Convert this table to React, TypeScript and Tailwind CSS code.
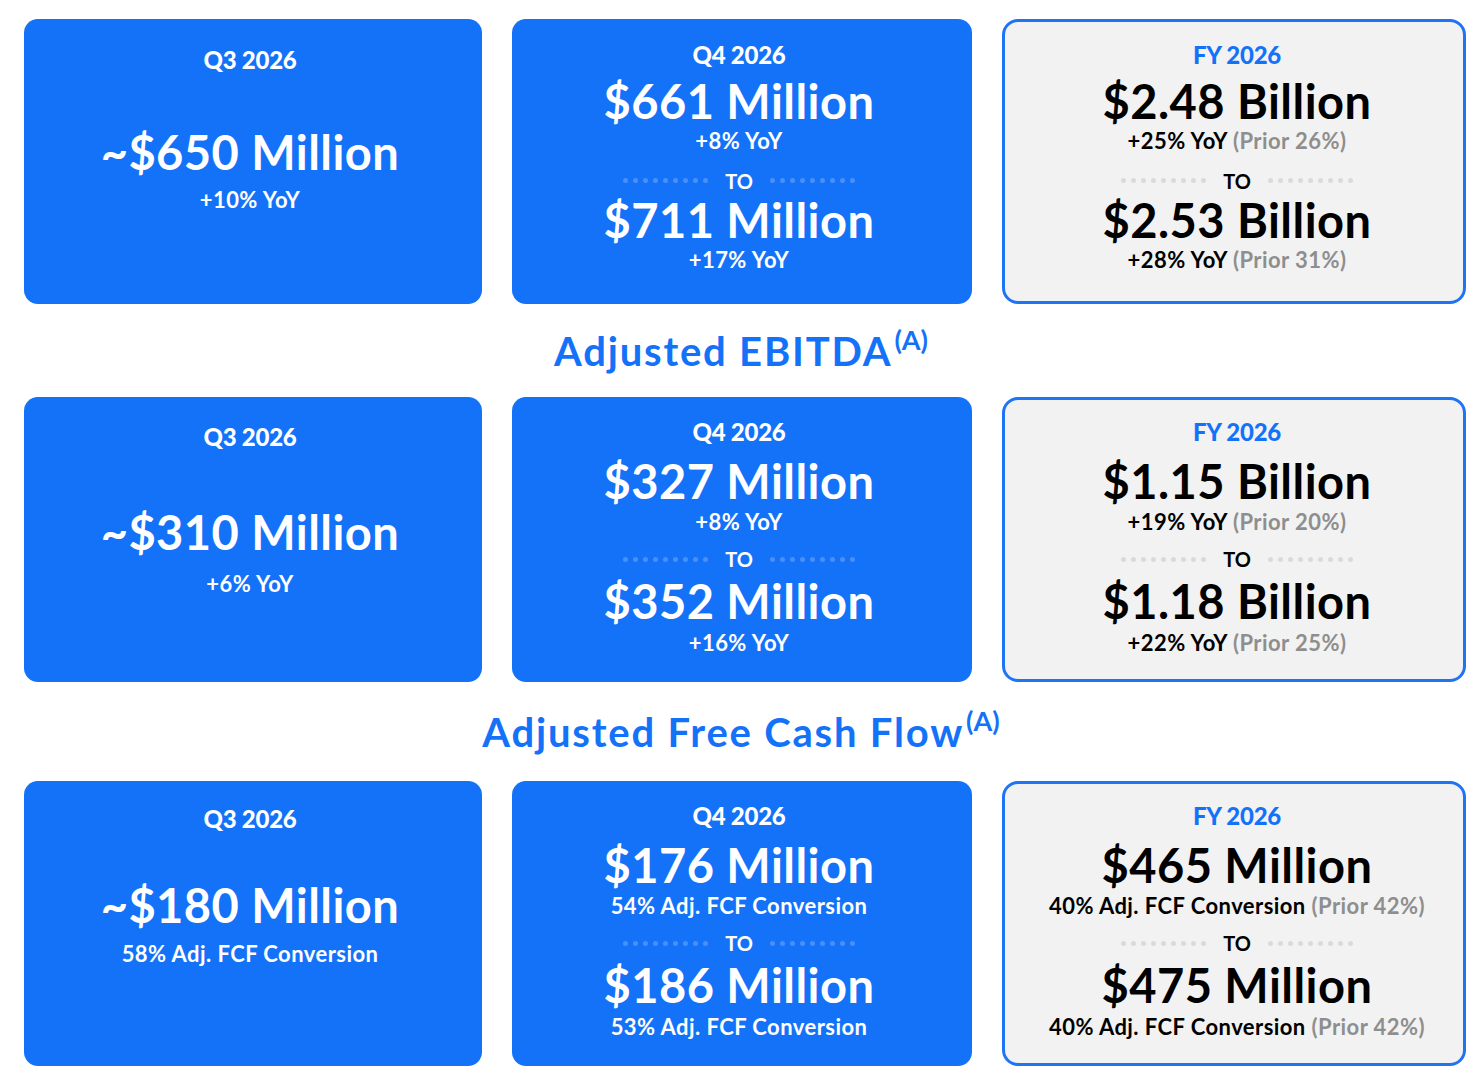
import React from 'react';

type Sub = { text: string; prior?: string };

type Range = {
  title: string;
  low: string;
  lowSub: Sub;
  high: string;
  highSub: Sub;
};

type Single = {
  title: string;
  value: string;
  sub: string;
  pt: string;
  valueMt: string;
  subMt: string;
};

type Section = {
  heading?: string;
  headingH: string;
  compact?: boolean;
  single: Single;
  quarter: Range;
  year: Range;
};

const sections: Section[] = [
  {
    headingH: '',
    compact: true,
    single: { title: 'Q3 2026', value: '~$650 Million', sub: '+10% YoY', pt: 'pt-[29px]', valueMt: 'mt-[58px]', subMt: 'mt-[11px]' },
    quarter: {
      title: 'Q4 2026',
      low: '$661 Million',
      lowSub: { text: '+8% YoY' },
      high: '$711 Million',
      highSub: { text: '+17% YoY' },
    },
    year: {
      title: 'FY 2026',
      low: '$2.48 Billion',
      lowSub: { text: '+25% YoY', prior: 'Prior 26%' },
      high: '$2.53 Billion',
      highSub: { text: '+28% YoY', prior: 'Prior 31%' },
    },
  },
  {
    heading: 'Adjusted EBITDA',
    headingH: 'h-[93px]',
    single: { title: 'Q3 2026', value: '~$310 Million', sub: '+6% YoY', pt: 'pt-[28px]', valueMt: 'mt-[61px]', subMt: 'mt-[15px]' },
    quarter: {
      title: 'Q4 2026',
      low: '$327 Million',
      lowSub: { text: '+8% YoY' },
      high: '$352 Million',
      highSub: { text: '+16% YoY' },
    },
    year: {
      title: 'FY 2026',
      low: '$1.15 Billion',
      lowSub: { text: '+19% YoY', prior: 'Prior 20%' },
      high: '$1.18 Billion',
      highSub: { text: '+22% YoY', prior: 'Prior 25%' },
    },
  },
  {
    heading: 'Adjusted Free Cash Flow',
    headingH: 'h-[99px]',
    single: { title: 'Q3 2026', value: '~$180 Million', sub: '58% Adj. FCF Conversion', pt: 'pt-[26px]', valueMt: 'mt-[52px]', subMt: 'mt-[12px]' },
    quarter: {
      title: 'Q4 2026',
      low: '$176 Million',
      lowSub: { text: '54% Adj. FCF Conversion' },
      high: '$186 Million',
      highSub: { text: '53% Adj. FCF Conversion' },
    },
    year: {
      title: 'FY 2026',
      low: '$465 Million',
      lowSub: { text: '40% Adj. FCF Conversion', prior: 'Prior 42%' },
      high: '$475 Million',
      highSub: { text: '40% Adj. FCF Conversion', prior: 'Prior 42%' },
    },
  },
];

const Dots = ({ light }: { light: boolean }) => (
  <div className="flex gap-[5px]">
    {Array.from({ length: 9 }).map((_, i) => (
      <span
        key={i}
        className={`w-[5px] h-[5px] rounded-full ${light ? 'bg-[#dadada]' : 'bg-[#4a8ffb]'}`}
      />
    ))}
  </div>
);

const SubLine = ({ sub }: { sub: Sub }) => (
  <>
    {sub.text}
    {sub.prior && <span className="text-[#8e8e8e]"> ({sub.prior})</span>}
  </>
);

const SingleCard = ({ data }: { data: Single }) => (
  <div className={`h-[285px] rounded-[14px] bg-[#1472f9] text-white flex flex-col items-center pr-[6px] ${data.pt}`}>
    <div className="leading-[24px] text-[24px] font-black tracking-[-0.01em]">{data.title}</div>
    <div className={`leading-[44px] text-[47px] font-bold tracking-[0.01em] ${data.valueMt}`}>{data.value}</div>
    <div className={`leading-[30px] text-[22px] font-bold tracking-[0.02em] ${data.subMt}`}>{data.sub}</div>
  </div>
);

const RangeCard = ({ data, fy, compact }: { data: Range; fy?: boolean; compact?: boolean }) => (
  <div
    className={`h-[285px] flex flex-col items-center ${
      fy
        ? 'rounded-[16px] border-[3px] border-[#1f74f6] bg-[#f2f2f2] text-black pl-[6px]'
        : 'rounded-[14px] bg-[#1472f9] text-white pr-[6px]'
    } ${compact ? (fy ? 'pt-[6px]' : 'pt-[9px]') : fy ? 'pt-[5px]' : 'pt-[8px]'}`}
  >
    <div className={`leading-[54px] text-[24px] font-black tracking-[-0.01em] ${fy ? 'text-[#1472f9]' : 'text-white'}`}>
      {data.title}
    </div>
    <div className={`text-[47px] font-bold tracking-[0.01em] ${compact ? 'leading-[39px]' : 'leading-[44px]'}`}>
      {data.low}
    </div>
    <div className={`text-[22px] font-bold tracking-[0.02em] ${compact ? 'leading-[40px]' : 'leading-[38px]'}`}>
      <SubLine sub={data.lowSub} />
    </div>
    <div className={`flex items-center gap-[17px] ${compact ? 'h-[39px]' : 'h-[36px]'}`}>
      <Dots light={!!fy} />
      <span className="text-[20px] font-bold leading-none">TO</span>
      <Dots light={!!fy} />
    </div>
    <div className={`text-[47px] font-bold tracking-[0.01em] ${compact ? 'leading-[41px]' : 'leading-[48px]'}`}>
      {data.high}
    </div>
    <div className={`text-[22px] font-bold tracking-[0.02em] ${compact ? 'leading-[38px]' : 'leading-[36px]'}`}>
      <SubLine sub={data.highSub} />
    </div>
  </div>
);

const App = () => {
  return (
    <div className="w-[1484px] h-[1084px] bg-white pt-[19px] pl-[24px] font-['Lato',sans-serif]">
      {sections.map((section, idx) => (
        <div key={idx}>
          {section.heading && (
            <div className={`w-[1434px] flex items-center justify-center ${section.headingH}`}>
              <h2 className="text-[40px] font-bold text-[#1472f9] tracking-[0.045em] leading-none">
                {section.heading}
                <sup className="text-[27px] relative -top-[16px] ml-[2px] tracking-normal">(A)</sup>
              </h2>
            </div>
          )}
          <div className="grid grid-cols-[458px_460px_464px] gap-x-[30px]">
            <SingleCard data={section.single} />
            <RangeCard data={section.quarter} compact={section.compact} />
            <RangeCard data={section.year} fy compact={section.compact} />
          </div>
        </div>
      ))}
    </div>
  );
};

export default App;
